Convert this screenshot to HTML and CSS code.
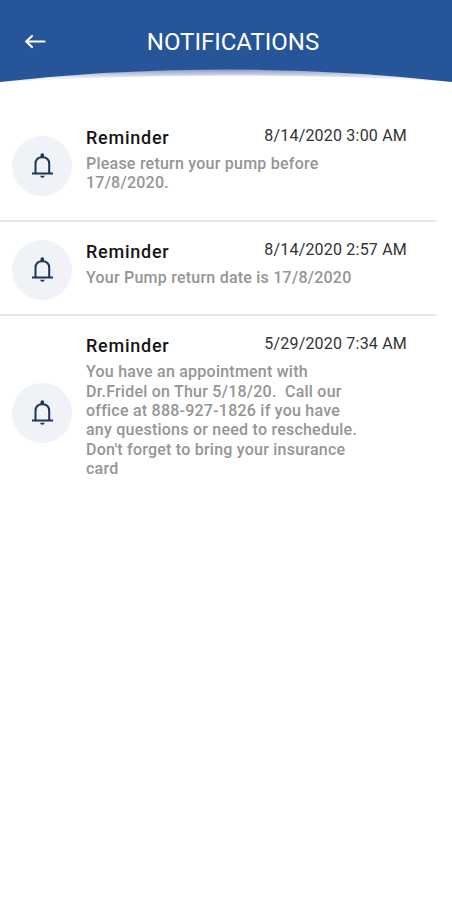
FILE: index.html
```
<!DOCTYPE html>
<html lang="en">

<head>
    <meta charset="utf-8">
    <meta name="viewport" content="width=device-width, initial-scale=1">
    <title>Notifications</title>
    <link rel="stylesheet" href="styles.css">
</head>

<body>
    <!-- bell shared by all rows -->
    <svg class="sprite" width="0" height="0">
        <symbol id="bell" viewBox="0 0 24 28">
            <path d="M5.500 21V12C5.500 7.800 8 5.200 12.300 5.200S19.200 7.800 19.200 12V21" fill="none" stroke="currentColor" stroke-width="2" />
            <path d="M2 21.500H23" stroke="currentColor" stroke-width="2" />
            <path d="M10.500 5V3A1.800 1.800 0 0 1 14.100 3V5Z" fill="currentColor" />
            <path d="M10.200 23.700H14.600A2.200 2 0 0 1 10.200 23.700Z" fill="currentColor" />
        </symbol>
    </svg>

    <header class="header">
        <div class="bar">
            <svg class="back" viewBox="0 0 22 16" width="22" height="16">
                <path d="M20.500 7.500H2.500M8 2L2.200 7.500L8 13" fill="none" stroke="#fff" stroke-width="2.200" stroke-linecap="round" stroke-linejoin="round" />
            </svg>
            <h1 class="title">NOTIFICATIONS</h1>
        </div>
        <svg class="curve" viewBox="0 0 452 16" width="452" height="16">
            <defs>
                <linearGradient id="shade" gradientUnits="userSpaceOnUse" x1="0" y1="0" x2="0" y2="9">
                    <stop offset="0" stop-color="#8799c2" />
                    <stop offset="0.450" stop-color="#b5c0da" />
                    <stop offset="1" stop-color="#eef0f6" />
                </linearGradient>
            </defs>
            <path d="M0 13Q226 -13 452 13Q226 0 0 13Z" fill="url(#shade)" />
            <path d="M0 0H452V13Q226 -12 0 13Z" fill="#265599" />
        </svg>
    </header>

    <main class="list">
        <article class="item">
            <div class="avatar"><svg class="bell"><use href="#bell" /></svg></div>
            <div class="content">
                <div class="top">
                    <h2 class="name">Reminder</h2>
                    <time class="date">8/14/2020 3:00 AM</time>
                </div>
                <p class="message">Please return your pump before<br>17/8/2020.</p>
            </div>
        </article>
        <article class="item">
            <div class="avatar"><svg class="bell"><use href="#bell" /></svg></div>
            <div class="content">
                <div class="top">
                    <h2 class="name">Reminder</h2>
                    <time class="date">8/14/2020 2:57 AM</time>
                </div>
                <p class="message">Your Pump return date is 17/8/2020</p>
            </div>
        </article>
        <article class="item">
            <div class="avatar"><svg class="bell"><use href="#bell" /></svg></div>
            <div class="content">
                <div class="top">
                    <h2 class="name">Reminder</h2>
                    <time class="date">5/29/2020 7:34 AM</time>
                </div>
                <p class="message">You have an appointment with<br>Dr.Fridel on Thur 5/18/20.&nbsp; Call our<br>office at 888-927-1826 if you have<br>any questions or need to reschedule.<br>Don't forget to bring your insurance<br>card</p>
            </div>
        </article>
    </main>
</body>

</html>
```
FILE: styles.css
```
body {
    margin: 0;
    background: #fff;
    font-family: Roboto, "Liberation Sans", sans-serif;
}

.sprite {
    display: block;
}

.header {
    height: 107.5px;
}

.bar {
    box-sizing: border-box;
    display: flex;
    align-items: center;
    height: 69px;
    padding: 14px 24px 0;
    background: #265599;
}

.back {
    flex: none;
}

.title {
    flex: 1;
    margin: 0 14px 0 0;
    padding-left: 6px;
    color: #fff;
    font-size: 24px;
    font-weight: 400;
    line-height: 28px;
    text-align: center;
}

.curve {
    display: block;
}

.list {
    width: 437px;
}

.item {
    box-sizing: border-box;
    display: flex;
    align-items: center;
    padding: 19px 30px 27.5px 12px;
}

.item + .item {
    border-top: 2px solid #e6e6e6;
}

.avatar {
    display: flex;
    align-items: center;
    justify-content: center;
    flex: none;
    width: 60px;
    height: 60px;
    margin: -1px 14px -14px 0;
    border-radius: 50%;
    background: #eff3f8;
}

.bell {
    width: 24px;
    height: 28px;
    color: #1d3557;
}

.content {
    flex: 1;
}

.top {
    display: flex;
    justify-content: space-between;
}

.name {
    margin: 0;
    color: #151515;
    font-size: 18px;
    font-weight: 500;
    line-height: 22px;
    letter-spacing: 0.75px;
}

.date {
    color: #333;
    font-size: 16px;
    line-height: 18px;
    letter-spacing: 0.2px;
}

.message {
    margin: 5px 0 0;
    color: #959595;
    font-size: 16px;
    font-weight: 500;
    line-height: 19.3px;
    letter-spacing: 0.23px;
    white-space: nowrap;
}
```
